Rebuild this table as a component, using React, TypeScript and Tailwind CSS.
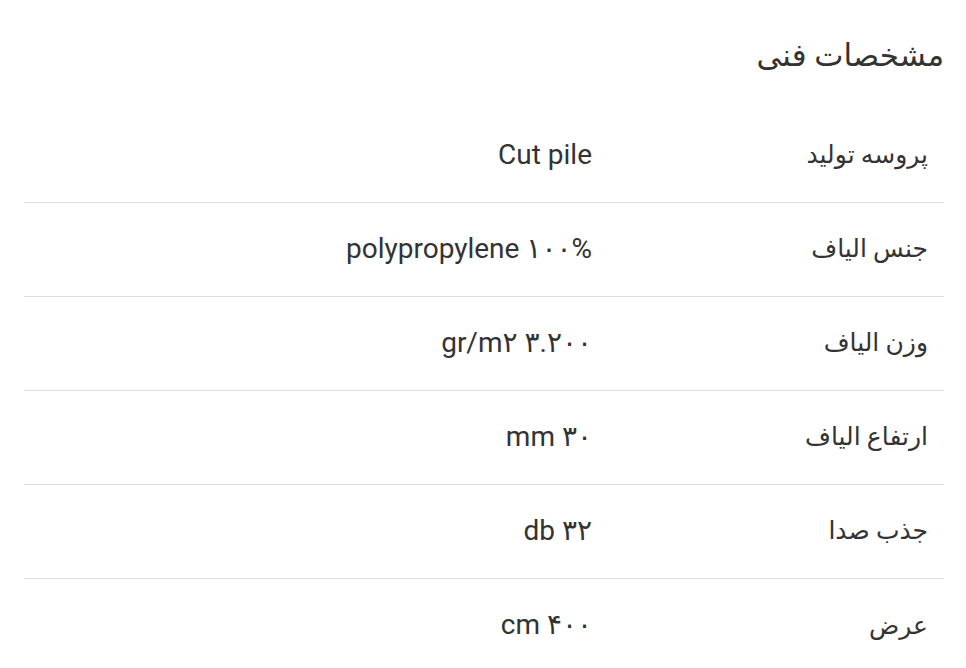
const specs = [
  { label: "پروسه تولید", value: "Cut pile" },
  { label: "جنس الیاف", value: "polypropylene ۱۰۰%" },
  { label: "وزن الیاف", value: "gr/m۲ ۳.۲۰۰" },
  { label: "ارتفاع الیاف", value: "mm ۳۰" },
  { label: "جذب صدا", value: "db ۳۲" },
  { label: "عرض", value: "cm ۴۰۰" },
];

export default function App() {
  return (
    <div
      dir="rtl"
      className="min-h-screen bg-white px-[22px] pt-[32px] text-[#333]"
      style={{ fontFamily: "Roboto, 'Noto Sans', 'DejaVu Sans', sans-serif" }}
    >
      <h2 className="text-[31px] leading-[48px] font-normal">مشخصات فنی</h2>

      <table className="mt-[28px] w-[920px] border-collapse text-[25px]">
        <tbody>
          {specs.map((s, i) => (
            <tr
              key={s.label}
              className={i < specs.length - 1 ? "border-b border-[#dddddd]" : ""}
            >
              <td className="h-[94px] w-[336px] px-4 text-right align-middle">{s.label}</td>
              <td className="h-[94px] px-4 text-right align-middle text-[28px]">{s.value}</td>
            </tr>
          ))}
        </tbody>
      </table>
    </div>
  );
}
